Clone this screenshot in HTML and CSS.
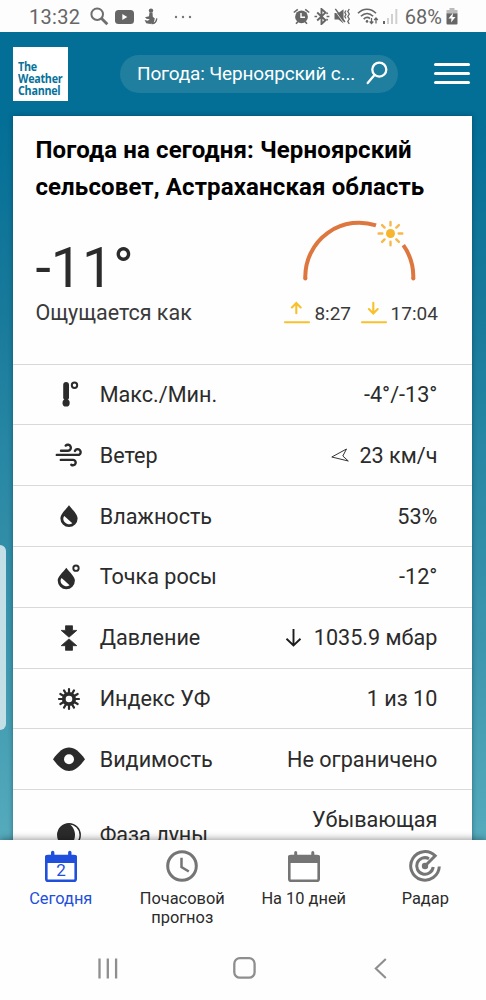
FILE: index.html
```html
<!DOCTYPE html>
<html lang="ru">
<head>
<meta charset="utf-8">
<meta name="viewport" content="width=device-width">
<title>Погода на сегодня</title>
<link rel="stylesheet" href="styles.css">
</head>
<body>
<div class="phone">
  <div class="status">
    <span class="clock">13:32</span>
    <svg class="st-search" width="19" height="19" viewBox="0 0 19 19" fill="none" stroke="#6e6e6e"><circle cx="7.2" cy="7.2" r="5.8" stroke-width="2"/><path d="M11.300 11.300l6 6" stroke-width="2.800"/></svg>
    <svg class="st-tube" width="19" height="14" viewBox="0 0 19 14"><rect width="19" height="14" rx="3.500" fill="#666"/><path d="M7.300 4v6l5-3z" fill="#fff"/></svg>
    <svg class="st-figure" width="14" height="17" viewBox="0 0 14 17" fill="#666"><circle cx="7" cy="2.600" r="2.200"/><path d="M5.500 4.500h3l.3 4.200 2 1.800-1 4.300-3.600 1.200-4-.7L.6 12l3.200.8 2-1.600-3.300-.4L1 9.300l4-1z"/><path d="M7.500 15.600c3.400.2 5-2 5.300-5.200" fill="none" stroke="#666" stroke-width="1.300"/></svg>
    <svg class="st-dots" width="18" height="4" viewBox="0 0 18 4" fill="#777"><circle cx="2" cy="2" r="1.200"/><circle cx="9" cy="2" r="1.200"/><circle cx="16" cy="2" r="1.200"/></svg>
    <div class="status-right">
      <svg width="17" height="17" viewBox="0 0 17 17" fill="none"><path d="M.8 4.500l4-3.200M16.200 4.500l-4-3.200M3 15.800l1.800-2M14 15.800l-1.800-2" stroke="#666" stroke-width="1.600"/><circle cx="8.500" cy="8.800" r="6.400" fill="#666"/><path d="M8 5v4.300h4" stroke="#fff" stroke-width="1.400"/></svg>
      <svg width="16" height="17" viewBox="0 0 16 17" fill="none" stroke="#666" stroke-width="1.900"><path d="M3.200 4.500l8.300 7.700L7.500 16V1l4 3.600-8.300 7.900"/><path d="M.5 8.500h2.600M12.600 8.500h2.800M12.500 6l1.300-1.200M12.500 11l1.300 1.200" stroke-width="1.400"/></svg>
      <svg width="17" height="17" viewBox="0 0 17 17"><path d="M.5 5h4L9.500 1.300v14.200L4.500 11.500h-4z" fill="#666"/><path d="M.5 2L10.300 15.600" stroke="#fff" stroke-width=".8"/><path d="M1.300.8L11 14" stroke="#666" stroke-width="1.400"/><path d="M12 2.500l-1.200 2L12 6.500l-1.200 2L12 10.500M15.300 1l-1.500 2.500 1.500 2.500-1.500 2.500 1.500 2.500-1.500 2.500 1.500 2.300" fill="none" stroke="#666" stroke-width="1.300"/></svg>
      <svg class="st-wifi" width="22" height="17" viewBox="0 0 22 17" fill="none" stroke="#666" stroke-width="1.600"><path d="M1 5.300c5-5.400 13-5.400 18 0M3.900 8.300c3.800-3.700 8.500-3.700 12.200 0M6.700 11.100c2-2 4.300-2.100 6.300-.6"/><circle cx="10" cy="13.400" r="1.300" fill="#666" stroke="none"/><path d="M14.500 10v5.500M12.700 13.500l1.800 2 1.800-2M19 15.500V10.200M17.200 12l1.800-2 1.800 2" stroke-width="1.300"/></svg>
      <svg width="15" height="17" viewBox="0 0 15 17"><path d="M0 13h2v3H0z" fill="#666"/><path d="M4 10h2v6H4zM8 6h2v10H8zM12.300 1h2v15h-2z" fill="#d0d0d0"/></svg>
      <span class="battery">68%</span>
      <svg class="st-bat" width="12" height="17" viewBox="0 0 12 17"><path d="M3.500 0h5v2h3v4H.5V2h3z" fill="#bbb"/><path d="M.5 5.500h11v10a1 1 0 0 1-1 1h-9a1 1 0 0 1-1-1z" fill="#666"/><path d="M7 5l-4.500 5.400h3L5 14.500l4.500-5.400h-3z" fill="#fff"/></svg>
    </div>
  </div>

  <main class="app">
    <header class="header">
      <div class="logo"><div>The<br>Weather<br>Channel</div></div>
      <div class="search">
        <span>Погода: Черноярский с...</span>
        <svg width="22" height="24" viewBox="0 0 22 24" fill="none" stroke="#fff" stroke-width="2.300" stroke-linecap="round"><circle cx="13.300" cy="8.600" r="7"/><path d="M8.500 14L1.700 22"/></svg>
      </div>
      <div class="menu"><i></i><i></i><i></i></div>
    </header>

    <section class="card">
      <div class="summary">
        <h1>Погода на сегодня: Черноярский<br>сельсовет, Астраханская область</h1>
        <div class="now">
          <div>
            <div class="temp">-11°</div>
            <div class="feels">Ощущается как</div>
          </div>
          <div class="sun">
            <svg width="152" height="64" viewBox="0 0 152 64" fill="none"><path d="M20.300 59.500V57A54 54 0 0 1 91 6.300M118.300 26.200A54 54 0 0 1 128.300 57V59.500" stroke="#de773f" stroke-width="4"/><circle cx="20.300" cy="59.500" r="2" fill="#de773f"/><circle cx="128.300" cy="59.500" r="2" fill="#de773f"/><circle cx="105.500" cy="14.500" r="4.500" fill="#f7b52d"/><path d="M105.500 6.400V3M105.500 22.800v3.400M97.300 14.500h-3.700M113.700 14.500h3.600M99.600 8.600l-2.500-2.500M111.300 8.600l2.600-2.500M99.600 20.400l-2.500 2.500M111.300 20.400l2.600 2.500" stroke="#f7b84a" stroke-width="2.400" stroke-linecap="round"/></svg>
            <div class="times">
              <svg width="26" height="23" viewBox="0 0 26 23" fill="none" stroke="#f8c12c" stroke-width="2.100" stroke-linecap="round"><path d="M12.300 12.300V2M7.900 6.500L12.300 2l4.400 4.500M1 21.200h24"/></svg>
              <span class="rise">8:27</span>
              <svg width="26" height="23" viewBox="0 0 26 23" fill="none" stroke="#f8c12c" stroke-width="2.100" stroke-linecap="round"><path d="M12.300 1.800v10.500M7.900 8l4.400 4.400L16.700 8M1 21.200h24"/></svg>
              <span class="set">17:04</span>
            </div>
          </div>
        </div>
      </div>

      <div class="row"><svg viewBox="0 0 32 32"><path d="M11.200 6a2.900 2.900 0 0 1 5.800 0v12.300a2.900 2.900 0 0 1-5.800 0z" fill="#2b2b2b"/><circle cx="14.100" cy="23.900" r="3.600" fill="#2b2b2b"/><circle cx="22.500" cy="6.200" r="2.700" fill="none" stroke="#2b2b2b" stroke-width="2"/></svg><span class="label">Макс./Мин.</span><span class="value">-4°/-13°</span></div>
      <div class="row"><svg viewBox="0 0 32 32" fill="none" stroke="#2b2b2b" stroke-width="2.400" stroke-linecap="round"><path d="M9 11.700H16a3 3 0 1 0-2.300-5.100M4.800 15.900h22.100a3 3 0 1 0-4-3.900M8.800 20.900h12.400a2.700 2.700 0 1 1-1.900 4.800"/></svg><span class="label">Ветер</span><span class="value"><svg class="dir" width="18" height="14" viewBox="0 0 18 14" fill="none" stroke="#333" stroke-width="1"><path d="M.8 9L15.500 1l-3.700 7 5.500 5z"/></svg>23 км/ч</span></div>
      <div class="row"><svg viewBox="0 0 32 32"><path d="M17 5.200c4 5.200 8.600 9 8.600 13.300a8.600 8.600 0 0 1-17.200 0C8.400 14.200 13 10.400 17 5.200z" fill="#2b2b2b"/><path d="M12.300 16l8 7.200c-3.600 2.700-9.200-.7-9-4.800.1-1 .4-1.800 1-2.400z" fill="#fff"/></svg><span class="label">Влажность</span><span class="value">53%</span></div>
      <div class="row"><svg viewBox="0 0 32 32"><path d="M14.300 6.800c4 5.200 8.600 9 8.600 12.800a8.600 8.600 0 0 1-17.200 0c0-3.800 4.600-7.600 8.600-12.800z" fill="#2b2b2b"/><path d="M9.600 17.100l8 7.200c-3.600 2.700-9.200-.7-9-4.800.1-1 .4-1.800 1-2.400z" fill="#fff"/><circle cx="24" cy="7.200" r="2.700" fill="none" stroke="#2b2b2b" stroke-width="1.900"/></svg><span class="label">Точка росы</span><span class="value">-12°</span></div>
      <div class="row"><svg viewBox="0 0 32 32" fill="#2b2b2b"><path d="M13.500 3.800h7v4.600h4.300l-7.800 6.800-7.800-6.800h4.300zM13.500 28.300h7v-4.600h4.300L17 16.900l-7.800 6.800h4.300z" stroke="#2b2b2b" stroke-width=".8" stroke-linejoin="round"/></svg><span class="label">Давление</span><span class="value"><svg class="down" width="17" height="19" viewBox="0 0 17 19" fill="none" stroke="#1d1d1d" stroke-width="1.900"><path d="M8.500 1v16.500M1.500 10.700l7 6.800 7-6.800"/></svg>1035.9 мбар</span></div>
      <div class="row"><svg viewBox="0 0 32 32" fill="none" stroke="#2b2b2b"><circle cx="17" cy="16" r="5.200" stroke-width="3.800"/><path stroke-width="2.200" stroke-linecap="round" d="M17 10V6M20 10.800l2-3.460M22.200 13l3.460-2M23 16h4M22.200 19l3.460 2M20 21.200l2 3.460M17 22v4M14 21.200l-2 3.460M11.800 19l-3.460 2M11 16H7M11.800 13l-3.460-2M14 10.800l-2-3.460"/></svg><span class="label">Индекс УФ</span><span class="value">1 из 10</span></div>
      <div class="row"><svg viewBox="0 0 32 32"><path d="M1 16.200C7 8 11.500 4.500 17 4.500S27 8 33 16.200C27 24.400 22.500 27.900 17 27.900S7 24.400 1 16.200z" fill="#2b2b2b"/><circle cx="17" cy="16.200" r="5" fill="#fff"/></svg><span class="label">Видимость</span><span class="value">Не ограничено</span></div>
      <div class="row last"><svg viewBox="0 0 32 32"><circle cx="17" cy="16" r="11.200" fill="none" stroke="#2b2b2b" stroke-width="1.500"/><path d="M17 4.800a11.200 11.200 0 0 0 0 22.400c8-5 8-17.400 0-22.400z" fill="#2b2b2b"/></svg><span class="label">Фаза луны</span><span class="value">Убывающая<br>луна</span></div>
    </section>
    <div class="edge"></div>
  </main>

  <footer class="bottom">
    <nav class="tabs">
      <div class="tab active"><svg width="32" height="32" viewBox="0 0 32 32"><rect x="1.300" y="6" width="29.400" height="24.700" rx="1.800" fill="#fff" stroke="#1f4fdb" stroke-width="2.600"/><path d="M0 7a2 2 0 0 1 2-2h28a2 2 0 0 1 2 2v6H0z" fill="#1f4fdb"/><path d="M7.700 2.500v5M24.800 2.500v5" stroke="#1f4fdb" stroke-width="3.400" stroke-linecap="round"/><text x="16" y="26" text-anchor="middle">2</text></svg><span>Сегодня</span></div>
      <div class="tab"><svg width="32" height="32" viewBox="0 0 32 32" fill="none" stroke="#757575" stroke-width="3"><circle cx="16" cy="16" r="14.300"/><path d="M15.500 7.800V17l7.300 4.500" stroke-width="2.500"/></svg><span>Почасовой<br>прогноз</span></div>
      <div class="tab"><svg width="32" height="32" viewBox="0 0 32 32"><rect x="1.300" y="6" width="29.400" height="24.700" rx="1.800" fill="#fff" stroke="#757575" stroke-width="2.600"/><path d="M0 7a2 2 0 0 1 2-2h28a2 2 0 0 1 2 2v6H0z" fill="#757575"/><path d="M7.700 2.500v5M24.800 2.500v5" stroke="#757575" stroke-width="3" stroke-linecap="round"/></svg><span>На 10 дней</span></div>
      <div class="tab"><svg width="32" height="32" viewBox="0 0 32 32" fill="none" stroke="#757575" stroke-width="3"><path d="M30.300 16.500A14.300 14.300 0 1 1 26.200 5.800L16.500 15.500"/><path d="M24.200 17A8.300 8.300 0 1 1 20 8.700"/><circle cx="16" cy="16" r="3.200" fill="#757575" stroke="none"/></svg><span>Радар</span></div>
    </nav>
    <div class="sysnav">
      <svg width="20" height="21" viewBox="0 0 20 21" stroke="#8e8e8e" stroke-width="2.300"><path d="M1.500 .5v20M9.800 .5v20M18.100 .5v20"/></svg>
      <svg class="home" width="23" height="22" viewBox="0 0 23 22" fill="none" stroke="#8e8e8e" stroke-width="2.300"><rect x="1.300" y="1.200" width="20.300" height="19.500" rx="5.500"/></svg>
      <svg class="back" width="13" height="21" viewBox="0 0 13 21" fill="none" stroke="#8e8e8e" stroke-width="2.100"><path d="M11.800 1L1.800 10.500l10 9.500"/></svg>
    </div>
  </footer>
</div>
</body>
</html>
```
FILE: styles.css
```css
* { box-sizing: border-box; }
body {
  margin: 0;
  font-family: Roboto, "Noto Sans", sans-serif;
  color: #2b2b2b;
  background: #fff;
}
svg { display: block; flex: none; }
.phone {
  width: 486px;
  height: 1000px;
  display: flex;
  flex-direction: column;
  overflow: hidden;
}
.status {
  height: 32.400px;
  flex: none;
  display: flex;
  align-items: center;
  padding: 1px 28px 0 29px;
  background: #fdfdfd;
  color: #666;
}
.clock { font-size: 20px; letter-spacing: 0.3px; width: 61px; }
.st-tube { margin-left: 6px; }
.st-figure { margin-left: 10px; }
.st-dots { margin-left: 16px; }
.status-right { margin-left: auto; display: flex; align-items: center; gap: 4px; }
.st-wifi { margin-left: 2px; }
.battery { font-size: 20px; margin-left: 3px; }
.app {
  position: relative;
  height: 807.600px;
  flex: none;
  overflow: hidden;
  background: linear-gradient(#036e96 0, #036e96 10%, #1b7c9c 38%, #2384a2 47%, #3b95ad 75%, #55abbc 100%);
}
.header {
  height: 83.600px;
  padding: 0 16px 1px 13px;
  display: flex;
  align-items: center;
}
.logo {
  width: 55px;
  height: 54px;
  padding: 14px 0 0 5px;
  background: #fff;
  color: #08729a;
  font: bold 12.500px/12.200px "Open Sans", sans-serif;
}
.logo div {
  width: 54px;
  letter-spacing: -0.3px;
  transform: scaleX(0.86);
  transform-origin: left;
}
.search {
  width: 278px;
  height: 38px;
  margin-left: 52px;
  padding: 0 10px 1px 17px;
  border-radius: 19px;
  background: #207f9f;
  color: #fff;
  display: flex;
  align-items: center;
  justify-content: space-between;
  font-size: 19px;
  letter-spacing: -0.160px;
  white-space: nowrap;
}
.menu {
  width: 36px;
  margin-left: auto;
  display: grid;
  gap: 5.500px;
}
.menu i { height: 3.500px; border-radius: 2px; background: #fff; }
.card {
  width: 459px;
  margin-left: 13.400px;
  background: #fefefe;
  box-shadow: 0 0 5px rgba(0, 40, 60, 0.45);
}
.summary { height: 247.700px; padding: 16px 35px 0 22px; }
h1 {
  margin: 0;
  color: #000;
  font-size: 24px;
  line-height: 37px;
  letter-spacing: 0.130px;
  font-weight: 700;
  white-space: nowrap;
}
.now { display: flex; justify-content: space-between; }
.temp { margin-top: 30px; height: 65.500px; font-size: 55.500px; line-height: 65px; }
.feels { font-size: 21.500px; line-height: 24px; color: #3a3a3a; }
.sun { width: 152px; margin-top: 13px; }
.times {
  display: flex;
  align-items: center;
  margin: 15.500px 0 0 -1px;
  font-size: 19px;
  color: #3a3a3a;
}
.times span { padding-top: 4px; }
.times svg { margin-top: 2px; }
.rise { margin: 0 9.500px 0 4px; }
.set { margin-left: 4px; }
.row {
  height: 60.800px;
  padding: 0 35px 0 39px;
  border-top: 1px solid #d9d9d9;
  display: flex;
  align-items: center;
  font-size: 21.600px;
}
.row > svg { width: 32px; height: 32px; overflow: visible; }
.label { margin-left: 15.300px; }
.value { margin-left: auto; display: flex; align-items: center; text-align: right; }
.dir { margin-right: 10px; }
.down { margin-right: 12px; }
.last { height: 91px; line-height: 30px; }
.edge {
  position: absolute;
  left: 0;
  top: 513px;
  width: 6px;
  height: 185px;
  border-radius: 0 6px 6px 0;
  background: #c5dfe7;
}
.bottom {
  position: relative;
  flex: 1;
  background: #fefefe;
  box-shadow: 0 -1px 7px rgba(0, 0, 0, 0.4);
}
.tabs { display: grid; grid-template-columns: repeat(4, 1fr); height: 97px; padding-top: 10px; }
.tab { display: flex; flex-direction: column; align-items: center; text-align: center; font-size: 16.400px; line-height: 19.500px; }
.tab span { margin-top: 7px; }
.tab text { font-size: 17px; fill: #1f4fdb; }
.active { color: #1f4fdb; }
.sysnav { display: flex; align-items: center; padding: 20.500px 99px 0 98px; }
.home { margin-left: 115px; }
.back { margin-left: auto; }
```
